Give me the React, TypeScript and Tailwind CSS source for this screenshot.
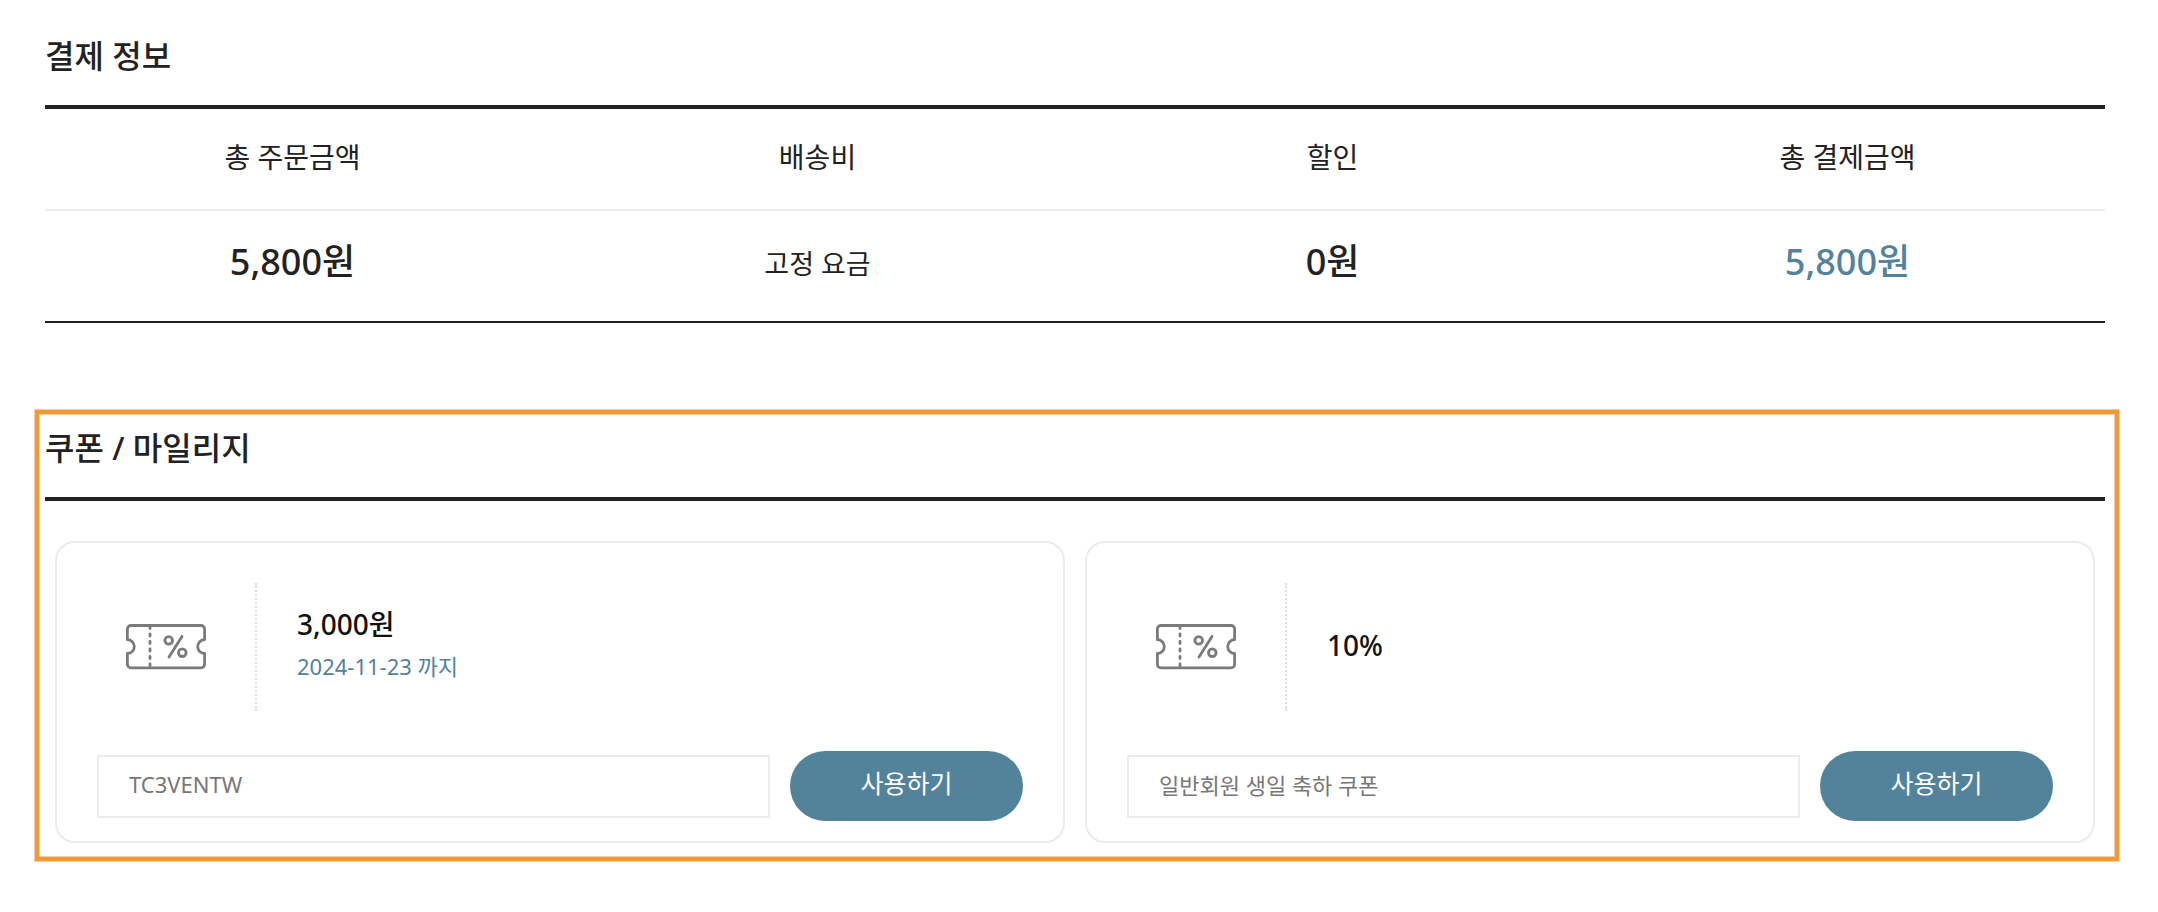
import { useState } from 'react';

interface Coupon {
  id: string;
  discount: string;
  expiresAt?: string;
  name: string;
}

const coupons: Coupon[] = [
  {
    id: 'coupon-1',
    discount: '3,000원',
    expiresAt: '2024-11-23 까지',
    name: 'TC3VENTW'
  },
  { id: 'coupon-2', discount: '10%', name: '일반회원 생일 축하 쿠폰' }
];

function SectionTitle({ children }: { children: string }) {
  return (
    <h2 className="border-b-4 border-[#222] pb-[25px] text-[32px] leading-[48px] font-medium">
      {children}
    </h2>
  );
}

function TicketIcon() {
  return (
    <svg
      viewBox="0 0 80 46"
      className="h-[46px] w-20"
      fill="none"
      stroke="#7a7a7a"
      strokeWidth="2.8"
      strokeLinecap="round"
      strokeLinejoin="round"
      aria-hidden="true"
    >
      <path d="M5 1.5H75A3.6 3.6 0 0 1 78.6 5.1V15.7A6.9 6.9 0 0 0 78.6 29.5V40.2A3.6 3.6 0 0 1 75 43.8H5A3.6 3.6 0 0 1 1.4 40.2V29.5A6.9 6.9 0 0 0 1.4 15.7V5.1A3.6 3.6 0 0 1 5 1.5Z" />
      <path d="M24 2.5V43" strokeDasharray="2 5.5" />
      <circle cx="42.7" cy="16.4" r="3.8" />
      <circle cx="56.3" cy="28.7" r="3.8" />
      <path d="M56 12.4L43 33" />
    </svg>
  );
}

function CouponCard({ coupon }: { coupon: Coupon }) {
  const [name, setName] = useState(coupon.name);

  return (
    <li className="flex-1 rounded-[20px] border-2 border-[#ececec] px-10 pt-10 pb-5">
      <div className="flex h-32">
        <div className="flex w-40 items-center justify-center border-r-2 border-dotted border-[#ddd] pr-5">
          <TicketIcon />
        </div>
        <div className="flex flex-col justify-center pb-1 pl-10">
          <strong className="text-[28px] leading-10 font-medium text-[#111]">
            {coupon.discount}
          </strong>
          {coupon.expiresAt && (
            <span className="pt-0.5 text-[22px] leading-10 text-[#53829b]">
              {coupon.expiresAt}
            </span>
          )}
        </div>
      </div>
      <div className="mt-10 flex items-center gap-5">
        <input
          id={coupon.id}
          type="text"
          aria-label="쿠폰"
          value={name}
          onChange={(e) => setName(e.target.value)}
          className="h-[63px] min-w-0 flex-1 border-2 border-[#ececec] px-[30px] pb-1 text-[22px] text-[#777]"
        />
        <button
          type="button"
          className="h-[70px] w-[233px] rounded-full bg-[#53829b] pb-1 text-[25px] text-white"
        >
          사용하기
        </button>
      </div>
    </li>
  );
}

export default function App() {
  return (
    <main className="bg-white pt-8 pr-[39px] pb-12 pl-[35px] font-['Noto_Sans','Noto_Sans_CJK_KR',sans-serif] text-[#222]">
      <section className="pr-[14px] pl-[10px]">
        <SectionTitle>결제 정보</SectionTitle>
        <table className="w-full table-fixed border-b-2 border-[#222] text-center text-[28px]">
          <thead>
            <tr className="h-[101px] border-b-2 border-[#ececec]">
              <th className="pr-5 pb-1 font-normal">총 주문금액</th>
              <th className="px-5 pb-1 font-normal">배송비</th>
              <th className="px-5 pb-1 font-normal">할인</th>
              <th className="px-5 pb-1 font-normal">총 결제금액</th>
            </tr>
          </thead>
          <tbody>
            <tr className="h-28">
              <td className="pr-5 pb-2 text-[36px] font-medium">5,800원</td>
              <td className="px-5 pb-1 text-[27px]">고정 요금</td>
              <td className="px-5 pb-2 text-[36px] font-medium">0원</td>
              <td className="px-5 pb-2 text-[36px] font-medium text-[#53829b]">
                5,800원
              </td>
            </tr>
          </tbody>
        </table>
      </section>
      <section className="mt-[87px] border-4 border-[#f09937] pt-[10px] pr-[10px] pb-[14px] pl-[6px] shadow-[0_0_0_1px_#f8cf9c,inset_0_0_0_1px_#f8cf9c]">
        <SectionTitle>쿠폰 / 마일리지</SectionTitle>
        <ul className="mt-10 flex gap-5 px-[10px]">
          {coupons.map((coupon) => (
            <CouponCard key={coupon.id} coupon={coupon} />
          ))}
        </ul>
      </section>
    </main>
  );
}
